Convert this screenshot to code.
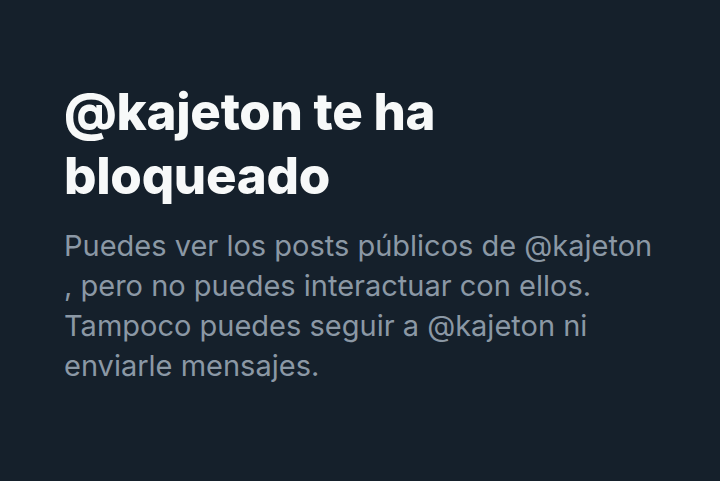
export default function App() {
  return (
    <div className="w-[720px] h-[481px] bg-[#15202b] font-['Inter',sans-serif] overflow-hidden">
      <div className="pt-[80px] pl-[64px] pr-[20px]">
        <h1 className="text-[51px] leading-[64px] font-extrabold tracking-[-0.3px] text-[#f7f9f9] mb-[18px]">
          @kajeton te ha
          <br />
          bloqueado
        </h1>
        <p className="text-[29px] leading-[40px] text-[#8b98a5]">
          Puedes ver los posts públicos de @kajeton
          <br />
          , pero no puedes interactuar con ellos.
          <br />
          Tampoco puedes seguir a @kajeton ni
          <br />
          enviarle mensajes.
        </p>
      </div>
    </div>
  );
}
